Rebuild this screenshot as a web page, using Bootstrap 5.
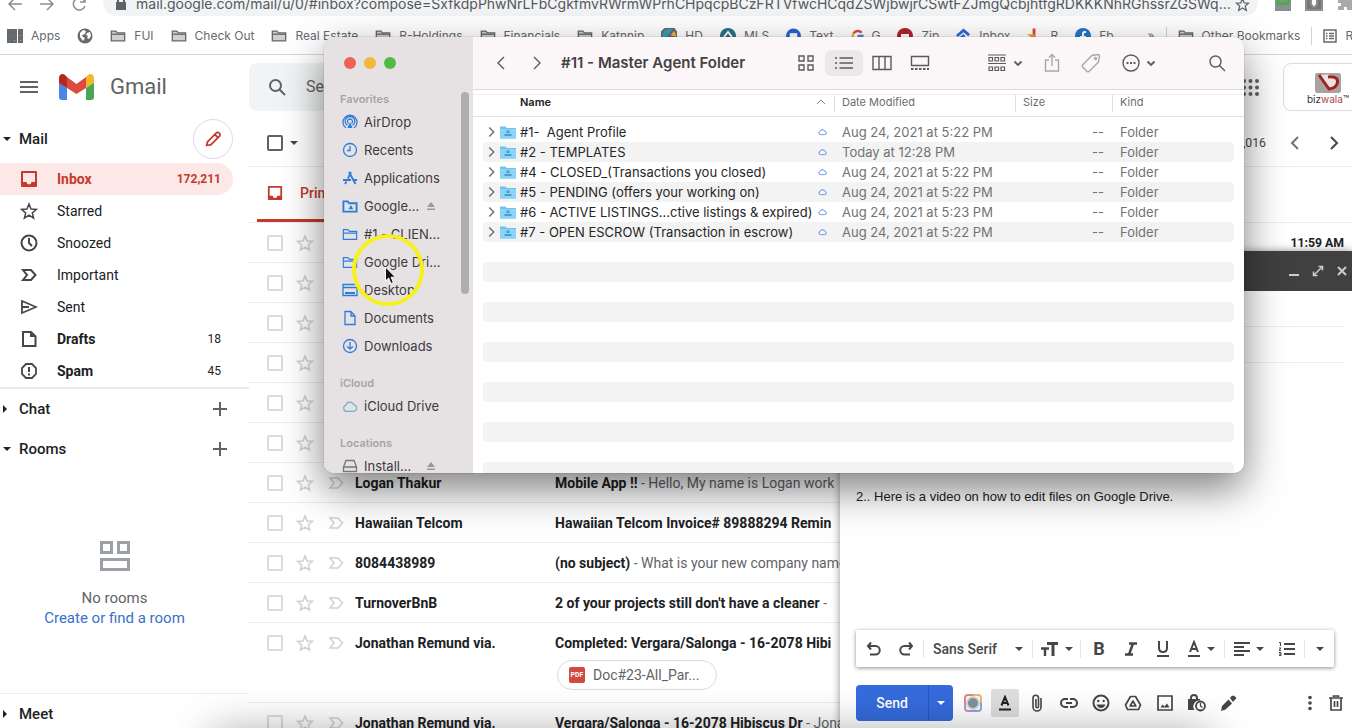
<!DOCTYPE html>
<html lang="en">
<head>
<meta charset="utf-8">
<meta name="viewport" content="width=device-width, initial-scale=1">
<title>Inbox - Gmail</title>
<link href="https://cdn.jsdelivr.net/npm/bootstrap@5.3.0/dist/css/bootstrap.min.css" rel="stylesheet">
<style>
:root { --ink:#202124; --muted:#5f6368; --line:#ececec; --red:#c5392f; }
html, body { height:100%; }
body { font-family:Roboto, Arial, sans-serif; font-size:14px; line-height:20px; color:var(--ink); background:#fff; overflow:hidden; }
svg { display:block; flex:none; fill:none; stroke:currentColor; stroke-width:2; }
svg.solid, svg .solid { fill:currentColor; stroke:none; }
svg.fine { stroke-width:1.5; }
button { background:none; border:0; padding:0; color:inherit; font:inherit; display:flex; align-items:center; justify-content:center; flex:none; }
a { color:inherit; text-decoration:none; }
.shell { height:100vh; }
.caret { width:0; height:0; border:4px solid transparent; border-top-color:currentColor; border-bottom:0; flex:none; }
.caret-right { width:0; height:0; border:4px solid transparent; border-left-color:currentColor; border-right:0; flex:none; }

/* browser chrome */
.address-row { height:18px; overflow:hidden; color:#8b8e92; gap:12px; font-family:Inter, sans-serif; padding:0 0 2px 7px; }
.address-row > svg { margin-bottom:4px; }
.omnibox { height:28px; background:#f1f3f4; border-radius:14px; gap:9px; padding:4px 8px 0 12px; color:var(--muted); }
.omnibox input { border:0; background:none; padding:0; font-size:14px; line-height:20px; color:#55585c; min-width:0; margin-right:-8px; text-overflow:ellipsis; outline:0; }
.extensions { width:82px; gap:13px; padding:0 0 4px 4px; overflow:hidden; }
.bookmarks { height:37px; border-bottom:1px solid #d5d7d9; gap:17px; padding-left:7px; font-family:Inter, sans-serif; font-size:12px; color:#66696d; overflow:hidden; white-space:nowrap; }
.bookmarks a { display:flex; align-items:center; gap:8px; flex:none; }
.more-marks { gap:11px; margin-left:17px; }
.tall-rule { width:1px; height:18px; background:#d0d2d5; flex:none; }

/* mail header */
.masthead { height:64px; color:var(--muted); }
.brand-area { width:249px; padding-left:19px; gap:20px; }
.wordmark { font-size:22px; line-height:32px; }
.search-box { width:720px; height:48px; border-radius:8px; background:#f1f3f4; padding-left:19px; gap:20px; }
.search-box input { border:0; background:none; font-size:16px; color:var(--muted); padding:0; }
.account { width:90px; height:48px; margin-right:-21px; border:1px solid #dadce0; border-radius:8px; font-family:Inter, sans-serif; font-size:10px; line-height:12px; padding-top:9px; color:#333; }
.account span span { color:#a8484a; }

/* mail navigation */
.side { width:249px; }
.side-title { height:40px; padding:0 16px 0 3px; font-size:15px; gap:8px; }
.side-title .plus { width:26px; color:var(--muted); }
.pen { width:40px; height:40px; border:1px solid #dadce0; border-radius:50%; color:var(--red); }
.side-link { height:32px; padding:0 28px 0 20px; gap:19px; }
.side-link svg { color:#444746; }
.side-link span:last-child { font-size:12px; }
.side-link.current { width:233px; padding-right:12px; background:#fce8e6; border-radius:0 16px 16px 0; color:var(--red); font-weight:700; }
.side-link.current svg { color:inherit; }
.mail-nav { border-bottom:2px solid var(--line); }
.no-rooms { padding:72px 20px 0 0; height:225px; color:var(--muted); font-size:15px; border-bottom:1px solid var(--line); }
.no-rooms svg { color:#9aa0a6; margin-bottom:17px; }
.no-rooms a { color:#3c6fc8; }

/* message list */
.list-tools { height:48px; border-bottom:1px solid var(--line); padding:0 12px 0 18px; gap:7px; color:#444746; }
.tabs { height:56px; border-bottom:1px solid var(--line); }
.tab { width:250px; margin-left:8px; padding-left:10px; gap:17px; color:var(--red); font-weight:500; border-bottom:3px solid var(--red); }
.box { appearance:none; width:16px; height:16px; margin:0; border:2px solid #dadcde; border-radius:2px; flex:none; }
.box.dark { border-color:#5f6368; }
.message { min-height:40px; border-bottom:1px solid var(--line); padding:10px 8px 0 18px; white-space:nowrap; }
.marks { width:88px; gap:13px; color:#cfd1d3; padding-top:2px; flex:none; }
.marks svg { stroke-width:1.5; margin-top:-1px; }
.from { width:200px; font-weight:700; flex:none; }
.snippet { color:var(--muted); overflow:hidden; }
.snippet b { color:var(--ink); }
.chip { width:160px; height:30px; margin:7px 0 12px 2px; border:1px solid #dadce0; border-radius:15px; padding-left:11px; gap:8px; color:var(--muted); }
.pdf { background:#d24a3d; color:#fff; border-radius:2px; font-size:7px; line-height:16px; width:16px; font-weight:700; text-align:center; }

/* compose window */
.compose { position:absolute; right:0; bottom:0; width:512px; height:477px; background:#fff; box-shadow:0 0 8px rgba(0,0,0,.45); }
.compose-bar { height:40px; background:#404040; color:#ccc; gap:6px; padding-right:1px; }
.compose-bar button { width:18px; }
.field-line { height:36px; margin:0 8px 0 16px; border-bottom:1px solid var(--line); }
.letter { padding:124px 16px 0; font:13px/20px "Liberation Sans", Arial, sans-serif; color:#222; }
.format { height:37px; margin:0 18px 18px 16px; padding-left:2px; box-shadow:0 1px 4px rgba(0,0,0,.45); border-radius:2px; color:#444746; background:#fff; }
.format button, .send-row .tool { width:32px; height:32px; }
.format .wide { width:44px; gap:6px; }
.format .last { width:26px; }
.format .rule-v { width:1px; height:18px; background:#e4e4e4; margin:0 2px 0 1px; flex:none; }
.font-pick { width:105px; padding:0 8px 0 7px; flex:none; }
.font-pick select { appearance:none; border:0; background:none; padding:0; color:inherit; font:500 14px/20px Roboto, sans-serif; width:76px; }
.glyph { font-weight:700; font-size:18px; line-height:20px; }
.send-row { padding:0 0 7px 16px; color:#444746; }
.send { width:73px; height:36px; background:#356bdc; color:#fff; border-radius:4px 0 0 4px; font-weight:500; border-right:1px solid #2a57b8; }
.send-more { width:24px; height:36px; background:#356bdc; color:#fff; border-radius:0 4px 4px 0; margin-right:4px; }
.tool.on span { width:28px; height:28px; background:#dedede; border-radius:2px; display:grid; place-items:center; color:#202124; }

/* finder window */
.finder { position:absolute; left:324px; top:37px; width:920px; height:436px; border-radius:10px; overflow:hidden; background:#fff; font-family:Inter, "Helvetica Neue", sans-serif; font-size:13px; color:#3c3a3b; }
.finder-shade { position:absolute; left:324px; top:37px; width:920px; height:436px; border-radius:10px; box-shadow:0 0 1px rgba(0,0,0,.6), 0 16px 40px rgba(0,0,0,.5); }
.places { width:149px; background:#e6e2e4; position:relative; flex:none; padding-left:16px; }
.lights { gap:8px; padding:20px 0 23px 4px; }
.lights i { width:12px; height:12px; border-radius:50%; }
.places h2 { font-size:11px; line-height:14px; font-weight:600; color:#a7a3a5; margin:0; padding-bottom:2px; }
.places a { display:flex; align-items:center; height:28px; gap:6px; padding-left:2px; white-space:nowrap; }
.places a svg { color:#2f7bd8; stroke-width:1.3; }
.places a .eject { color:#9c989a; margin-left:auto; margin-right:37px; }
.places a .cyan { color:#6fb0cc; }
.places a .disk { color:#777; }
.places a + h2 { padding-top:16px; }
.thumb { position:absolute; right:4px; top:55px; width:8px; height:202px; border-radius:4px; background:#b0adae; }
.finder-bar { height:53px; background:#fbf6f7; border-bottom:1px solid #dcd7d8; padding:0 18px 0 22px; color:#5d595b; }
.finder-bar svg { stroke-width:1.4; }
.finder-bar h1 { font-size:15px; line-height:20px; font-weight:600; margin:0; padding-left:2px; color:#444142; }
.finder-bar .view { width:38px; height:26px; border-radius:6px; }
.finder-bar .view.on { background:#ece7e8; }
.apart { margin-left:21px; }
.far-apart { margin-left:52px; }
.with-menu { gap:6px; }
.files { width:100%; border-collapse:separate; border-spacing:0; table-layout:fixed; white-space:nowrap; margin-top:4px; }
.files th { height:23px; vertical-align:top; border-top:1px solid #f0f0f0; border-bottom:1px solid #e2e2e2; font-size:11px; line-height:12px; font-weight:400; color:#6d6d6d; padding:0; }
.files th div { border-left:1px solid #dedede; height:17px; padding:1px 0 0 7px; }
.files th:nth-child(2) { color:#222; font-weight:600; padding:1px 0 0 37px; }
.files th svg { color:#888; }
.files td { height:20px; padding:0; line-height:20px; color:#727272; overflow:hidden; }
.files tbody tr:first-child td { height:5px; }
.files .name { color:#262626; }
.files .name > div { padding:0 7px 0 4px; }
.files .gutter { width:10px; }
.files tr:nth-child(2n+1) td:not(.gutter) { background:#f3f3f3; }
.files tbody tr:first-child td:not(.gutter) { background:none; }
.files tr td:nth-child(2) { border-radius:4px 0 0 4px; }
.files tr td:nth-child(5) { border-radius:0 4px 4px 0; }

/* pointer highlight and dock shade */
.halo { position:absolute; left:352px; top:234px; width:72px; height:72px; border:4px solid #f6f01c; border-radius:50%; pointer-events:none; }
.pointer { position:absolute; left:384px; top:266px; }
.dock-shade { position:absolute; left:220px; right:150px; bottom:-34px; height:20px; box-shadow:0 0 44px 8px rgba(0,0,0,.4); pointer-events:none; }
</style>
</head>
<body>
<svg width="0" height="0" class="position-absolute">
  <symbol id="star" viewBox="0 0 18 18"><path d="M9 2l2 5 5.300.400-4 3.500 1.300 5.200L9 13.200l-4.600 2.900 1.300-5.200-4-3.500L7 7z"/></symbol>
  <symbol id="imp" viewBox="0 0 18 18"><path d="M3 4h8l4.500 5-4.500 5H3l4-5z"/></symbol>
  <symbol id="fold" viewBox="0 0 18 16"><path d="M1.500 13.500v-11h5l2 2h8v9zM1.500 6.500h15" /></symbol>
  <symbol id="bfold" viewBox="0 0 18 16"><path fill="#cfcfcf" stroke-width="1.500" d="M1.500 13.500v-11h5l2 2h8v9z"/><path stroke-width="1.500" d="M1.500 6h15"/></symbol>
  <symbol id="tray" viewBox="0 0 18 18"><path stroke-linejoin="round" d="M2 2h14v14H2z"/><path class="solid" d="M2 12h4.500a2.500 2.500 0 0 0 5 0H16v4H2z"/></symbol>
  <symbol id="eject" viewBox="0 0 10 10"><path class="solid" d="M5 1l4 5H1zM1 7.500h8V9H1z"/></symbol>
  <symbol id="cloud" viewBox="0 0 18 14"><path d="M5 12.500a3.700 3.700 0 0 1-.500-7.200A4.500 4.500 0 0 1 13 5a3.800 3.800 0 0 1 .500 7.500z"/></symbol>
  <symbol id="drivefolder" viewBox="0 0 16 14"><path fill="#6fc3ea" stroke="none" d="M0 1.500h5.500l1.500 1.500H16v10.500H0z"/><path fill="#8ad4f5" stroke="none" d="M0 4h16v9.500H0z"/><path fill="#4b9dca" stroke="none" d="M6.500 5.500h3v2.500h-3zM4.500 9h7v2h-7z"/></symbol>
  <symbol id="down" viewBox="0 0 10 10"><path d="M1.500 3.500L5 7l3.500-3.500" stroke-width="1.800"/></symbol>
  <symbol id="lens" viewBox="0 0 18 18"><circle cx="7.500" cy="7.500" r="5.500"/><path d="M11.500 11.500L17 17"/></symbol>
  <symbol id="next" viewBox="0 0 12 16"><path d="M3 2l6 6-6 6"/></symbol>
  <symbol id="prev" viewBox="0 0 12 16"><path d="M9 2L3 8l6 6"/></symbol>
</svg>

<div class="shell d-flex flex-column position-relative overflow-hidden">
  <div class="address-row d-flex align-items-end flex-shrink-0">
    <svg class="fine" width="16" height="16" viewBox="0 0 16 16"><path d="M15 8H2M8 2L2 8l6 6"/></svg>
    <svg class="ms-1 fine" width="16" height="16" viewBox="0 0 16 16"><path d="M1 8h13M8 2l6 6-6 6"/></svg>
    <svg class="ms-1 fine" width="16" height="16" viewBox="0 0 16 16"><path d="M14 6a6 6 0 1 0 0 4M14 1v5H9"/></svg>
    <div class="omnibox d-flex align-items-center flex-grow-1 ms-1">
      <svg class="solid" width="12" height="14" viewBox="0 0 12 14"><path d="M1 5h1V3.500a4 4 0 0 1 8 0V5h1v8H1zM4 5h4V3.500a2 2 0 0 0-4 0z"/></svg>
      <input class="flex-grow-1" type="text" aria-label="Address" value="mail.google.com/mail/u/0/#inbox?compose=SxfkdpPhwNrLFbCgkfmvRWrmWPrhCHpqcpBCzFRTVfwcHCqdZSWjbwjrCSwtFZJmgQcbjhtfgRDKKKNhRGhssrZGSWq...">
      <svg class="fine" width="15" height="15" viewBox="0 0 18 18"><use href="#star"/></svg>
    </div>
    <div class="extensions d-flex">
      <svg width="18" height="18" viewBox="0 0 18 18" stroke="none"><path fill="#42b03c" d="M2 0h14v12H2zM2 14h14v2H2z"/><path fill="#fff" d="M6 5h6v2H6z"/></svg>
      <svg width="18" height="18" viewBox="0 0 18 18" stroke="none"><path fill="#777" d="M1 0h16v16H1z"/><path fill="#fff" d="M6 4h6v6l-2 3H8l-2-3z"/></svg>
      <svg class="solid opacity-75" width="18" height="18" viewBox="0 0 18 18"><path d="M2 4h5V1h4v3h5v12h-5v-3H8v3H2v-4h3V9H2z"/></svg>
    </div>
  </div>
  <nav class="bookmarks d-flex align-items-center flex-shrink-0" aria-label="Bookmarks">
    <a href="#"><svg width="16" height="14" viewBox="0 0 16 14" stroke="none"><path fill="#d2553f" d="M1 0h3v3H1zM6 0h3v3H6zM12 0h3v3h-3z"/><path fill="#4aa35a" d="M1 5h3v3H1z"/><path fill="#4b82d8" d="M6 5h3v3H6z"/><path fill="#e0a93b" d="M12 5h3v3h-3zM6 10h3v3H6zM12 10h3v3h-3z"/><path fill="#4aa35a" d="M1 10h3v3H1z"/></svg>Apps</a>
    <a href="#" aria-label="Site"><svg width="16" height="16" viewBox="0 0 16 16"><circle class="solid" cx="8" cy="8" r="7.500"/><path fill="#fff" stroke="none" d="M3 5l3-3 3 1-1 3-3 1 1 2 2 1-2 3-3-4zM10 5l3-1 1 4-2 3-2-1 1-2-2-1z"/></svg></a>
    <a href="#"><svg width="16" height="16"><use href="#bfold"/></svg>FUI</a>
    <a href="#"><svg width="16" height="16"><use href="#bfold"/></svg>Check Out</a>
    <a href="#"><svg width="16" height="16"><use href="#bfold"/></svg>Real Estate</a>
    <a href="#"><svg width="16" height="16"><use href="#bfold"/></svg>R-Holdings</a>
    <a href="#"><svg width="16" height="16"><use href="#bfold"/></svg>Financials</a>
    <a href="#"><svg width="16" height="16"><use href="#bfold"/></svg>Katnnip</a>
    <a href="#"><svg width="16" height="16" viewBox="0 0 16 16" stroke="none"><circle cx="8" cy="8" r="8" fill="#3a9bb5"/><path fill="#f0b43a" d="M8 8l5-7 3 5v4z"/></svg>HD</a>
    <a href="#"><svg width="16" height="16" viewBox="0 0 16 16"><circle cx="8" cy="8" r="8" fill="#2a7285" stroke="none"/><path stroke="#fff" d="M4 9l4-5 4 5"/></svg>MLS</a>
    <a href="#"><svg width="15" height="16" viewBox="0 0 16 16" stroke="none"><circle cx="8" cy="8" r="8" fill="#2c62c9" stroke="none"/><path fill="#fff" stroke="none" d="M4 5h8v5H4z"/></svg>Text</a>
    <a href="#"><svg width="13" height="14" viewBox="0 0 16 16"><path stroke="#dc4a3a" stroke-width="3" d="M13 4A6 6 0 0 0 3 5"/><path stroke="#e8b030" stroke-width="3" d="M3 5a6 6 0 0 0 0 6"/><path stroke="#4a84e0" stroke-width="3" d="M8 8h6a6 6 0 0 1-3 5"/></svg>G</a>
    <a href="#"><svg width="16" height="16" viewBox="0 0 16 16"><circle cx="8" cy="8" r="8" fill="#b3202b" stroke="none"/><path fill="#fff" stroke="none" d="M4 6h8v3H4z"/></svg>Zip</a>
    <a href="#"><svg width="15" height="16" viewBox="0 0 16 16"><path stroke="#2f6bd8" stroke-width="3" d="M1 8l7-6 6 5M4 11l5-4"/></svg>Inbox</a>
    <a href="#"><svg width="15" height="16" viewBox="0 0 16 16"><path fill="#d9482f" stroke="none" d="M6 0h3v9H6z"/><path fill="#f0a13a" stroke="none" d="M0 6h8v6zM9 9h7l-5 5z"/></svg>R</a>
    <a href="#"><svg width="16" height="16" viewBox="0 0 16 16"><circle cx="8" cy="8" r="8" fill="#2378c8" stroke="none"/><path stroke="#fff" d="M11 4H9.500Q8 4 8 6v10M5 9h6"/></svg>Fb</a>
    <div class="more-marks d-flex align-items-center">
      <span>»</span>
      <span class="tall-rule"></span>
      <a href="#"><svg width="16" height="16"><use href="#bfold"/></svg>Other Bookmarks</a>
      <span class="tall-rule"></span>
      <a href="#" aria-label="Reading list"><svg width="14" height="14" viewBox="0 0 14 14"><path stroke-width="1.500" d="M1 1h12v12H1z"/><path stroke-width="1.300" d="M3 4.500h1.500M6 4.500h5M3 7h1.500M6 7h5M3 9.500h1.500M6 9.500h5"/></svg>R</a>
    </div>
  </nav>

  <header class="masthead d-flex align-items-center flex-shrink-0">
    <div class="brand-area d-flex align-items-center">
      <button aria-label="Main menu"><svg width="20" height="14" viewBox="0 0 20 14"><path d="M1 2h18M1 7h18M1 12h18"/></svg></button>
      <div class="d-flex align-items-center gap-3">
        <svg width="35" height="27" viewBox="0 0 35 27"><g stroke="none"><path fill="#4a86e8" d="M0 8l8 6v12H3a3 3 0 0 1-3-3z"/><path fill="#4ba758" d="M35 8l-8 6v12h5a3 3 0 0 0 3-3z"/><path fill="#dd4b3e" d="M8 3l9.500 7L27 3v11l-9.500 6L8 14z"/><path fill="#b02a20" d="M0 9V4c0-3.500 3.500-5 6-3l2 2v11z"/><path fill="#f2b82a" d="M35 9V4c0-3.500-3.500-5-6-3l-2 2v11z"/></g></svg>
        <span class="wordmark">Gmail</span>
      </div>
    </div>
    <div class="search-box d-flex align-items-center">
      <svg width="18" height="18"><use href="#lens"/></svg>
      <input type="text" value="Search mail" aria-label="Search mail">
    </div>
    <button class="ms-auto me-4" aria-label="Google apps"><svg class="solid" width="17" height="17" viewBox="0 0 17 17"><g id="dots"><circle cx="2" cy="2" r="2"/><circle cx="8.500" cy="2" r="2"/><circle cx="15" cy="2" r="2"/></g><use href="#dots" y="6.500"/><use href="#dots" y="13"/></svg></button>
    <a href="#" class="account d-flex flex-column align-items-center"><svg width="26" height="20" viewBox="0 0 26 20"><rect width="26" height="20" rx="2" fill="#a9a39f" stroke="none"/><path fill="#e9e4e0" stroke="none" d="M6 2q16-2 17 6 0 8-9 9z"/><path stroke="#a3211f" stroke-width="3" d="M4 2l10 14q8-1 8.500-7T13 4"/></svg><span>biz<span>wala</span>™</span></a>
  </header>

  <div class="d-flex flex-grow-1">
    <aside class="side flex-shrink-0">
      <nav class="mail-nav">
        <div class="side-title d-flex align-items-center"><span class="caret"></span><span class="fw-medium">Mail</span>
          <button class="pen ms-auto" aria-label="Compose"><svg class="fine" width="18" height="18" viewBox="0 0 20 20"><path stroke-width="2" d="M3 17l1-4L14 3q1.500-1 3 .5t.5 3L7.500 16.500zM12 5l3 3"/></svg></button></div>
        <div class="pt-1">
          <a href="#" class="side-link current d-flex align-items-center"><svg width="18" height="18"><use href="#tray"/></svg><span>Inbox</span><span class="ms-auto">172,211</span></a>
          <a href="#" class="side-link d-flex align-items-center"><svg class="fine" width="18" height="18"><use href="#star"/></svg><span>Starred</span><span></span></a>
          <a href="#" class="side-link d-flex align-items-center"><svg width="18" height="18" viewBox="0 0 18 18"><circle cx="9" cy="9" r="7.500"/><path d="M9 4v5l3 3"/></svg><span>Snoozed</span><span></span></a>
          <a href="#" class="side-link d-flex align-items-center"><svg width="18" height="18"><use href="#imp"/></svg><span>Important</span><span></span></a>
          <a href="#" class="side-link d-flex align-items-center"><svg width="18" height="18" viewBox="0 0 18 18"><path stroke-width="1.800" d="M2 3l14 6-14 6zM2 9h7"/></svg><span>Sent</span><span></span></a>
          <a href="#" class="side-link d-flex align-items-center"><svg width="18" height="18" viewBox="0 0 18 18"><path d="M3 2h8l4.500 4.500V16H3z"/><path class="solid" d="M10 2l5 5h-5z"/></svg><span class="fw-bold">Drafts</span><span class="ms-auto">18</span></a>
          <a href="#" class="side-link d-flex align-items-center"><svg class="fine" width="18" height="18" viewBox="0 0 18 18"><path stroke-width="1.800" d="M6 2h6l4 4v6l-4 4H6l-4-4V6z"/><path stroke-width="2" d="M9 5v5M9 11.500v2"/></svg><span class="fw-bold">Spam</span><span class="ms-auto">45</span></a>
        </div>
      </nav>
      <div class="side-title d-flex align-items-center"><span class="caret-right me-1"></span><span class="fw-medium">Chat</span><button class="plus ms-auto" aria-label="New chat"><svg width="14" height="14" viewBox="0 0 14 14"><path d="M7 0v14M0 7h14"/></svg></button></div>
      <div class="side-title d-flex align-items-center"><span class="caret"></span><span class="fw-medium">Rooms</span><button class="plus ms-auto" aria-label="New room"><svg width="14" height="14" viewBox="0 0 14 14"><path d="M7 0v14M0 7h14"/></svg></button></div>
      <div class="no-rooms d-flex flex-column align-items-center">
        <svg width="30" height="30" viewBox="0 0 30 30"><path d="M1.500 1.500h10v10h-10zM18.500 1.500h10v10h-10zM1.500 18.500h27v10h-27z" stroke-width="3"/></svg>
        <span>No rooms</span>
        <a href="#">Create or find a room</a>
      </div>
      <div class="side-title d-flex align-items-center"><span class="caret-right me-1"></span><span class="fw-medium">Meet</span></div>
    </aside>

    <main class="flex-grow-1 overflow-hidden">
      <div class="list-tools d-flex align-items-center">
        <input class="box dark" type="checkbox" aria-label="Select all"><span class="caret"></span>
        <span class="ms-auto me-3 small">1–50 of 156,016</span>
        <button class="text-secondary me-3" aria-label="Newer"><svg width="12" height="16"><use href="#prev"/></svg></button>
        <button class="ms-1" aria-label="Older"><svg width="12" height="16"><use href="#next"/></svg></button>
      </div>
      <div class="tabs d-flex"><a href="#" class="tab d-flex align-items-center"><svg width="16" height="16" viewBox="0 0 18 18"><use href="#tray"/></svg>Primary</a></div>
      <div id="messages"></div>
    </main>
  </div>

  <section class="compose d-flex flex-column" aria-label="New message">
    <div class="compose-bar d-flex align-items-center justify-content-end flex-shrink-0">
      <button aria-label="Minimize"><svg width="12" height="12" viewBox="0 0 12 12"><path d="M1 10h10"/></svg></button>
      <button aria-label="Full screen"><svg width="12" height="12" viewBox="0 0 12 12"><path stroke-width="1.500" d="M2 10l8-8M6.500 1.500h4v4M5.500 10.500h-4v-4"/></svg></button>
      <button aria-label="Close"><svg width="12" height="12" viewBox="0 0 12 12"><path d="M2 2l8 8M10 2l-8 8"/></svg></button>
    </div>
    <div class="field-line flex-shrink-0"></div>
    <div class="field-line flex-shrink-0"></div>
    <div class="letter flex-grow-1">2.. Here is a video on how to edit files on Google Drive.</div>
    <div class="format d-flex align-items-center flex-shrink-0">
      <button aria-label="Undo"><svg width="16" height="16" viewBox="0 0 16 16"><path d="M5 1.500L2 5l3 3.500M2 5h7.500a4.200 4.200 0 0 1 0 8.500H4"/></svg></button>
      <button aria-label="Redo"><svg width="16" height="16" viewBox="0 0 16 16"><path d="M11 1.500L14 5l-3 3.500M14 5H6.500a4.200 4.200 0 0 0 0 8.500H12"/></svg></button>
      <span class="rule-v"></span>
      <div class="font-pick d-flex align-items-center justify-content-between"><select aria-label="Font"><option>Sans Serif</option></select><span class="caret"></span></div>
      <span class="rule-v"></span>
      <button class="wide" aria-label="Size"><svg width="18" height="16" viewBox="0 0 18 16"><path stroke-width="3" d="M6 2.500h11M12 2v13"/><path stroke-width="2.500" d="M0 7.500h8M4 7v8"/></svg><span class="caret"></span></button>
      <span class="rule-v"></span>
      <button aria-label="Bold"><span class="glyph">B</span></button>
      <button aria-label="Italic"><svg width="14" height="16" viewBox="0 0 14 16"><path stroke-width="2.500" d="M5 2.500h8M1 13.500h8M9 2.500L5 13.500"/></svg></button>
      <button aria-label="Underline"><svg width="14" height="18" viewBox="0 0 14 18"><path d="M3 1v7q0 4 4 4t4-4V1M1 16h12"/></svg></button>
      <button class="wide" aria-label="Text colour"><svg width="14" height="18" viewBox="0 0 14 18"><path d="M3 12L7 2l4 10M4.500 9h5M1 16h12"/></svg><span class="caret"></span></button>
      <span class="rule-v"></span>
      <button class="wide" aria-label="Align"><svg width="16" height="16" viewBox="0 0 16 16"><path d="M0 2h16M0 6h10M0 10h16M0 14h10"/></svg><span class="caret"></span></button>
      <button aria-label="Numbered list"><svg width="16" height="16" viewBox="0 0 16 16"><path d="M5 3h11M5 8h11M5 13h11"/><path stroke-width="1" d="M0 1.500h1.500V5M0 7h2L0 9.500h2M0 11.500h2v3H0M0 13h2"/></svg></button>
      <span class="rule-v"></span>
      <button class="last" aria-label="More formatting"><span class="caret"></span></button>
    </div>
    <div class="send-row d-flex align-items-center flex-shrink-0">
      <button class="send">Send</button><button class="send-more" aria-label="More send options"><span class="caret"></span></button>
      <button class="tool" aria-label="Recorder"><svg width="18" height="18" viewBox="0 0 18 18"><path stroke="#e8857f" d="M1 9V4q0-3 3-3h5"/><path stroke="#efb37c" d="M9 1h5q3 0 3 3v5"/><path stroke="#8aa7e0" d="M17 9v5q0 3-3 3H9"/><path stroke="#c08fd0" d="M9 17H4q-3 0-3-3V9"/><circle cx="9" cy="9" r="6" fill="#84919a" stroke="#cfdcd8"/></svg></button>
      <button class="tool on" aria-label="Formatting options"><span><svg width="14" height="16" viewBox="0 0 14 16"><path d="M3.500 10.500L7 2l3.500 8.500M4.500 8h5M1 14.500h12"/></svg></span></button>
      <button class="tool" aria-label="Attach files"><svg width="12" height="18" viewBox="0 0 12 18"><path stroke-width="1.600" d="M10 4v9a4 4 0 0 1-8 0V4a2.700 2.700 0 0 1 5.500 0v8.500a1.300 1.300 0 0 1-2.600 0V5"/></svg></button>
      <button class="tool" aria-label="Insert link"><svg width="18" height="10" viewBox="0 0 18 10"><path d="M8 1H5a4 4 0 0 0 0 8h3M10 1h3a4 4 0 0 1 0 8h-3M6 5h6"/></svg></button>
      <button class="tool" aria-label="Insert emoji"><svg width="18" height="18" viewBox="0 0 18 18"><circle cx="9" cy="9" r="7.500"/><circle class="solid" cx="6.300" cy="7" r="1.200"/><circle class="solid" cx="11.700" cy="7" r="1.200"/><path class="solid" d="M4.500 10.500h9q-1.500 3.500-4.500 3.500t-4.500-3.500z"/></svg></button>
      <button class="tool" aria-label="Insert from Drive"><svg width="18" height="16" viewBox="0 0 18 16"><path stroke-width="1.700" stroke-linejoin="round" d="M6.500 1.500h5l5 8.500-2 4.500h-11l-2-4.500zM9 6l2.800 5H6.200z"/></svg></button>
      <button class="tool" aria-label="Insert photo"><svg width="16" height="16" viewBox="0 0 16 16"><path stroke-width="1.700" d="M1 1h14v14H1z"/><path class="solid" d="M3.500 12.500l2-3 2 2 2.500-3 2.500 4z"/></svg></button>
      <button class="tool" aria-label="Confidential mode"><svg width="18" height="18" viewBox="0 0 18 18"><path class="solid" d="M0 5h12v1.500a6 6 0 0 0-5.500 9.500H0z"/><path d="M3 6V4a3 3 0 0 1 6 0v2"/><circle cx="12.500" cy="12" r="4.500" fill="#fff" stroke-width="1.800"/><path stroke-width="1.300" d="M12.500 9v3l2 1.500"/></svg></button>
      <button class="tool" aria-label="Insert signature"><svg class="solid" width="16" height="16" viewBox="0 0 16 16"><path d="M0 16l1-5 6.500-6.500L11 8.500l-6.500 6zM9 3l2-2.500 1 .5 1-.5 2.500 2.500-3.500 4z"/></svg></button>
      <button class="tool ms-auto w-auto px-2" aria-label="More options"><svg class="solid" width="4" height="16" viewBox="0 0 4 16"><circle cx="2" cy="2.500" r="1.800"/><circle cx="2" cy="8" r="1.800"/><circle cx="2" cy="13.500" r="1.800"/></svg></button>
      <button class="tool" aria-label="Discard draft"><svg width="14" height="16" viewBox="0 0 14 16"><path stroke-width="1.700" d="M0 3h14M2 3v12h10V3M4.500 2V1h5v1M5.500 6v6M8.500 6v6"/></svg></button>
    </div>
  </section>

  <div class="dock-shade"></div>

  <div class="finder-shade"></div>
  <section class="finder d-flex" aria-label="Finder">
    <aside class="places">
      <div class="lights d-flex"><i style="background:#ed6158"></i><i style="background:#f3b73c"></i><i style="background:#53bb45"></i></div>
      <h2>Favorites</h2>
      <a href="#"><svg width="16" height="16" viewBox="0 0 16 16"><path d="M4 14a7 7 0 1 1 8 0M5.500 11.500a4.800 4.800 0 1 1 5 0M6.500 9.500a2.500 2.500 0 1 1 3 0"/><path class="solid" d="M8 8l2.500 6h-5z"/></svg>AirDrop</a>
      <a href="#"><svg width="16" height="16" viewBox="0 0 16 16"><circle cx="8" cy="8" r="6.500"/><path d="M8 4v4.500H5"/></svg>Recents</a>
      <a href="#"><svg width="16" height="16" viewBox="0 0 16 16"><path stroke-width="1.800" d="M7 2l6.500 12M9 2L6 8.500M4.500 11.500L3 14M1 10h8M12 10h3"/></svg>Applications</a>
      <a href="#"><svg width="16" height="15" viewBox="0 0 17 15"><path stroke-width="2" d="M1.500 13V2h4.500l1.500 2h8v9z"/><path class="solid" d="M9.500 6l2.500 4.500H7z"/></svg>Google...<svg class="eject" width="10" height="10"><use href="#eject"/></svg></a>
      <a href="#"><svg width="16" height="15"><use href="#fold"/></svg>#1 - CLIEN...</a>
      <a href="#"><svg width="16" height="15"><use href="#fold"/></svg>Google Dri...</a>
      <a href="#"><svg width="16" height="14" viewBox="0 0 16 14"><path d="M1 1.500h14v11H1zM1 4.500h14"/><path class="solid" d="M3 9h10v2H3z"/></svg>Desktop</a>
      <a href="#"><svg width="16" height="16" viewBox="0 0 16 16"><path d="M3 1.500h6L13 6v8.500H3zM9 1.500V6h4"/></svg>Documents</a>
      <a href="#"><svg width="16" height="16" viewBox="0 0 16 16"><circle cx="8" cy="8" r="6.500"/><path d="M8 4v7M5 8.500L8 11l3-2.500"/></svg>Downloads</a>
      <h2>iCloud</h2>
      <a href="#"><svg class="cyan" width="16" height="13"><use href="#cloud"/></svg>iCloud Drive</a>
      <h2>Locations</h2>
      <a href="#"><svg class="disk" width="16" height="14" viewBox="0 0 16 14"><path d="M1.500 8L4 1.500h8L14.500 8v4.500h-13zM1.500 8h13"/></svg>Install...<svg class="eject" width="10" height="10"><use href="#eject"/></svg></a>
      <span class="thumb"></span>
    </aside>
    <div class="flex-grow-1 overflow-hidden">
      <div class="finder-bar d-flex align-items-center">
        <button class="me-4" aria-label="Back"><svg width="12" height="16"><use href="#prev"/></svg></button>
        <button class="me-3" aria-label="Forward"><svg width="12" height="16"><use href="#next"/></svg></button>
        <h1 class="me-auto">#11 - Master Agent Folder</h1>
        <button class="view" aria-label="Icons"><svg width="16" height="16" viewBox="0 0 16 16"><path d="M1 1h5v5H1zM10 1h5v5h-5zM1 10h5v5H1zM10 10h5v5h-5z"/></svg></button>
        <button class="view on" aria-label="List"><svg width="18" height="14" viewBox="0 0 18 14"><path d="M4.500 2H18M4.500 7H18M4.500 12H18M0 2h2M0 7h2M0 12h2"/></svg></button>
        <button class="view" aria-label="Columns"><svg width="20" height="16" viewBox="0 0 20 16"><path d="M1 1.500h18v13H1zM7 1.500v13M13 1.500v13"/></svg></button>
        <button class="view" aria-label="Gallery"><svg width="20" height="16" viewBox="0 0 20 16"><path d="M1.500 1.500h17v9h-17z"/><path stroke-width="2" stroke-dasharray="2.500 1.500" d="M1 14h18"/></svg></button>
        <button class="ms-5 with-menu" aria-label="Group"><svg width="20" height="18" viewBox="0 0 20 18"><path stroke-width="1.200" d="M1 1h18M1 9.500h18M2 3.500h3.500v3.500H2zM8 3.500h3.500v3.500H8zM14 3.500h3.500v3.500H14zM2 13h3.500v3.500H2zM8 13h3.500v3.500H8zM14 13h3.500v3.500H14z"/></svg><svg width="10" height="10"><use href="#down"/></svg></button>
        <button class="apart opacity-50" aria-label="Share"><svg width="16" height="20" viewBox="0 0 16 20"><path d="M5 7H1.500v11h13V7H11M8 13V2M5 4.500L8 1.500l3 3"/></svg></button>
        <button class="apart opacity-50" aria-label="Tags"><svg width="20" height="20" viewBox="0 0 20 20"><path d="M1.500 12L11 2.500l6-1q1.500 0 1.500 1.500l-1 6L8 18.500q-1 .5-2 0L1.500 14q-.5-1 0-2z"/><circle cx="14.500" cy="5.500" r="1"/></svg></button>
        <button class="apart with-menu" aria-label="More"><svg width="18" height="18" viewBox="0 0 18 18"><circle cx="9" cy="9" r="8"/><path stroke-width="2" stroke-dasharray="2 1.500" d="M4.500 9h9"/></svg><svg width="10" height="10"><use href="#down"/></svg></button>
        <button class="far-apart" aria-label="Search"><svg width="18" height="18"><use href="#lens"/></svg></button>
      </div>
      <table class="files">
        <colgroup><col style="width:10px"><col><col style="width:181px"><col style="width:97px"><col style="width:122px"><col style="width:10px"></colgroup>
        <thead><tr><th class="gutter"></th><th><span class="d-flex justify-content-between align-items-center pe-2">Name<svg width="10" height="10" viewBox="0 0 10 10"><path stroke-width="1" d="M1 7l4-4 4 4"/></svg></span></th><th><div>Date Modified</div></th><th><div>Size</div></th><th><div>Kind</div></th><th class="gutter"></th></tr></thead>
        <tbody id="rows"></tbody>
      </table>
    </div>
  </section>

  <div class="halo"></div>
  <svg class="pointer" width="13" height="19" viewBox="0 0 13 19"><path fill="#111" stroke="#fff" stroke-width="1" d="M1.500 1v14l3.200-3 2.200 5.500 2.500-1-2.300-5.300h4.400z"/></svg>
</div>

<script src="https://cdn.jsdelivr.net/npm/bootstrap@5.3.0/dist/js/bootstrap.bundle.min.js"></script>
<script>
const mail = [
  { time: '11:59 AM' }, {}, {}, {}, {}, {},
  { from: 'Logan Thakur', subject: 'Mobile App !!', body: ' - Hello, My name is Logan work' },
  { from: 'Hawaiian Telcom', subject: 'Hawaiian Telcom Invoice# 89888294 Remin' },
  { from: '8084438989', subject: '(no subject)', body: ' - What is your new company name' },
  { from: 'TurnoverBnB', subject: "2 of your projects still don't have a cleaner", body: ' -' },
  { from: 'Jonathan Remund via.', subject: 'Completed: Vergara/Salonga - 16-2078 Hibi', file: 'Doc#23-All_Par...' },
  { from: 'Jonathan Remund via.', subject: 'Vergara/Salonga - 16-2078 Hibiscus Dr', body: ' - Jonathan' }
];
const icon = id => `<svg width="18" height="18"><use href="#${id}"/></svg>`;
document.getElementById('messages').innerHTML = mail.map(m => `
  <div class="message d-flex">
    <div class="marks d-flex"><input class="box" type="checkbox" aria-label="Select">${icon('star')}${m.from ? icon('imp') : ''}</div>
    ${m.from ? `<span class="from">${m.from}</span><div class="snippet"><b>${m.subject}</b>${m.body || ''}
      ${m.file ? `<a href="#" class="chip d-flex align-items-center"><span class="pdf">PDF</span>${m.file}</a>` : ''}</div>` : ''}
    ${m.time ? `<span class="ms-auto fw-bold small">${m.time}</span>` : ''}
  </div>`).join('');

const folders = [
  ['#1-\u00a0 Agent Profile', 'Aug 24, 2021 at 5:22 PM'],
  ['#2 - TEMPLATES', 'Today at 12:28 PM'],
  ['#4 - CLOSED_(Transactions you closed)', 'Aug 24, 2021 at 5:22 PM'],
  ['#5 - PENDING (offers your working on)', 'Aug 24, 2021 at 5:22 PM'],
  ['#6 - ACTIVE LISTINGS...ctive listings &amp; expired)', 'Aug 24, 2021 at 5:23 PM'],
  ['#7 - OPEN ESCROW (Transaction in escrow)', 'Aug 24, 2021 at 5:22 PM']
];
const edge = '<td class="gutter"></td>';
const blank = `<tr>${edge}<td></td><td></td><td></td><td></td>${edge}</tr>`;
document.getElementById('rows').innerHTML = blank + folders.map(([name, date]) =>
  `<tr>${edge}<td class="name"><div class="d-flex align-items-center"><svg class="text-secondary" width="9" height="12" viewBox="0 0 12 16"><use href="#next"/></svg><svg class="ms-1 me-1" width="16" height="14"><use href="#drivefolder"/></svg><span>${name}</span><svg class="ms-auto" width="9" height="8" viewBox="0 0 18 14" style="color:#5a8fe6"><use href="#cloud"/></svg></div></td><td class="ps-2">${date}</td><td class="text-end pe-2">--</td><td class="ps-2">Folder</td>${edge}</tr>`
).join('') + blank.repeat(12);
</script>
</body>
</html>
